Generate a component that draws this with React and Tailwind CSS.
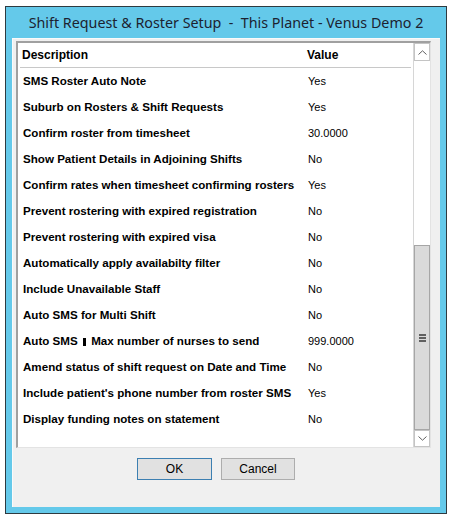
import React from 'react';

const rows = [
  ['SMS Roster Auto Note', 'Yes'],
  ['Suburb on Rosters & Shift Requests', 'Yes'],
  ['Confirm roster from timesheet', '30.0000'],
  ['Show Patient Details in Adjoining Shifts', 'No'],
  ['Confirm rates when timesheet confirming rosters', 'Yes'],
  ['Prevent rostering with expired registration', 'No'],
  ['Prevent rostering with expired visa', 'No'],
  ['Automatically apply availabilty filter', 'No'],
  ['Include Unavailable Staff', 'No'],
  ['Auto SMS for Multi Shift', 'No'],
  ['Auto SMS | Max number of nurses to send', '999.0000'],
  ['Amend status of shift request on Date and Time', 'No'],
  ["Include patient's phone number from roster SMS", 'Yes'],
  ['Display funding notes on statement', 'No'],
];

const Label = ({ text }) => {
  if (!text.includes('|')) return text;
  const [a, b] = text.split('|');
  return (
    <>
      {a}
      <span className="inline-block w-[3px] h-[8px] bg-black mx-[2px] align-[-1px]"></span>
      {b}
    </>
  );
};

const Chevron = ({ up }) => (
  <svg width="9" height="5" viewBox="0 0 9 5" className="text-[#606060]">
    <path d={up ? 'M0.5 4.5 L4.5 0.8 L8.5 4.5' : 'M0.5 0.5 L4.5 4.2 L8.5 0.5'} fill="none" stroke="currentColor" strokeWidth="1" />
  </svg>
);

export default function App() {
  return (
    <div className="w-[452px] h-[527px] bg-white pt-[6px] pl-[5px]" style={{ fontFamily: '"Liberation Sans", Arial, sans-serif' }}>
      <div className="w-[442px] h-[508px] border border-[#2e3a40] bg-[#64c9ea] flex flex-col">
        <div className="h-[31px] flex items-center justify-center text-[14.3px] text-[#1c2230] whitespace-pre" style={{ fontFamily: '"Noto Sans", sans-serif' }}>
          Shift Request &amp; Roster Setup  -  This Planet - Venus Demo 2
        </div>
        <div className="mx-[6px] h-[469px] bg-[#f0f0f0] border-l border-t border-[#fafafa] flex flex-col pl-[3px] pt-[2px]">
          <div className="w-[415px] h-[407px] border-t-2 border-l-2 border-[#a0a0a0] border-r border-b border-r-[#e3e3e3] border-b-[#e3e3e3] bg-white flex">
            <div className="flex-1 text-[11px] text-black">
              <div className="mx-[2px] h-[25px] border-b border-[#c8c8c8] grid grid-cols-[286px_1fr] items-center pl-[2px] font-bold text-[12px]">
                <span>Description</span>
                <span className="-ml-[1px]">Value</span>
              </div>
              {rows.map(([d, v]) => (
                <div key={d} className="h-[26px] grid grid-cols-[285px_1fr] items-center pl-[5px]">
                  <span className="font-bold whitespace-nowrap text-[11.6px]"><Label text={d} /></span>
                  <span>{v}</span>
                </div>
              ))}
            </div>
            <div className="w-[17px] flex flex-col border-l border-[#d6d6d6] bg-white">
              <div className="h-[18px] border border-[#c4c4c4] flex items-center justify-center bg-white">
                <Chevron up />
              </div>
              <div className="h-[184px]"></div>
              <div className="flex-1 bg-[#dadada] border border-[#a6a6a6] flex flex-col items-center justify-center gap-[1px]">
                <div className="w-[7px] h-[2px] bg-[#606060]"></div>
                <div className="w-[7px] h-[2px] bg-[#606060]"></div>
                <div className="w-[7px] h-[2px] bg-[#606060]"></div>
              </div>
              <div className="h-[17px] border border-[#c4c4c4] flex items-center justify-center bg-white">
                <Chevron />
              </div>
            </div>
          </div>
          <div className="flex gap-[9px] pl-[121px] mt-[10px] text-[12px]">
            <button className="w-[75px] h-[22px] bg-[#e1e1e1] border border-[#3c7fb1] text-black">OK</button>
            <button className="w-[74px] h-[22px] bg-[#e1e1e1] border border-[#adadad] text-black">Cancel</button>
          </div>
        </div>
      </div>
    </div>
  );
}
